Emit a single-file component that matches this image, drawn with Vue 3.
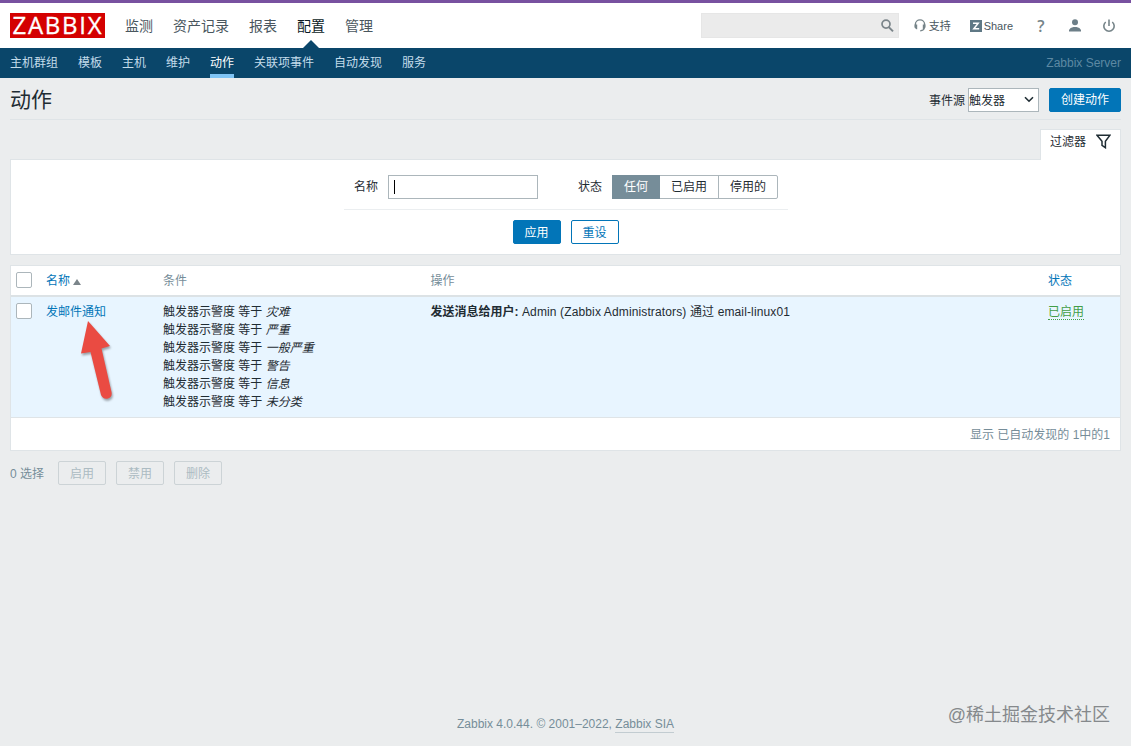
<template>
  <div class="page">
    <!-- 顶部导航 -->
    <header class="top-bar">
      <a class="logo">
        <svg width="95" height="25" viewBox="0 0 95 25">
          <rect width="95" height="25" fill="#d40000" />
          <text x="2.5" y="21.3" textLength="89" lengthAdjust="spacing">ZABBIX</text>
        </svg>
      </a>
      <nav class="top-nav">
        <a
          v-for="item in topMenu"
          :key="item"
          :class="{ selected: item === '配置' }"
        >{{ item }}</a>
      </nav>
      <div class="search">
        <svg width="14" height="14" viewBox="0 0 14 14">
          <circle cx="6" cy="5.1" r="4" fill="none" stroke="#7b858a" stroke-width="1.7" />
          <path d="M8.8 8.1L13 12.4" stroke="#7b858a" stroke-width="2" />
        </svg>
      </div>
      <div class="user-nav">
        <a class="support">
          <svg width="12" height="13" viewBox="0 0 12 13">
            <path d="M1.4 8V5.3a4.5 4.3 0 0 1 9.2 0V8" fill="none" stroke="#768489" stroke-width="1.4" />
            <path d="M.6 5.4h2.6v4.8H2.4L.6 8.8zM8.8 5.4h2.6v3.4L9.6 10.2H8.8z" fill="#768489" />
            <path d="M10.2 8.8q0 2.7-4 3" fill="none" stroke="#768489" stroke-width="1.3" />
          </svg>
          <span>支持</span>
        </a>
        <a class="share">
          <svg width="12" height="12" viewBox="0 0 12 12">
            <rect width="12" height="12" fill="#5f7885" />
            <path d="M3 3.2h5.2L3.8 8.8H9.2" fill="none" stroke="#fff" stroke-width="1.5" />
          </svg>
          <span>Share</span>
        </a>
        <a class="help">?</a>
        <a class="profile">
          <svg width="12" height="13" viewBox="0 0 12 13">
            <circle cx="6" cy="3.3" r="3" fill="#6d7f88" />
            <path d="M0 12.4V11Q1 8.4 4.5 8h3Q11 8.4 12 11v1.4z" fill="#6d7f88" />
          </svg>
        </a>
        <a class="power">
          <svg width="14" height="14" viewBox="0 0 14 14">
            <path d="M3.7 3A5.2 5.2 0 1 0 10.3 3" fill="none" stroke="#768489" stroke-width="1.6" />
            <path d="M7 .6V7" stroke="#768489" stroke-width="1.6" />
          </svg>
        </a>
      </div>
    </header>

    <!-- 二级导航 -->
    <nav class="sub-nav">
      <a
        v-for="item in subMenu"
        :key="item"
        :class="{ selected: item === '动作' }"
      >{{ item }}</a>
      <span class="server-name">Zabbix Server</span>
    </nav>

    <main class="content">
      <div class="title-row">
        <h1>动作</h1>
        <label>事件源</label>
        <div class="select">
          <span>触发器</span>
          <svg width="10" height="7" viewBox="0 0 10 7">
            <path d="M1 1.2L5 5.2L9 1.2" fill="none" stroke="#1f2c33" stroke-width="1.6" />
          </svg>
        </div>
        <button class="btn create-btn">创建动作</button>
      </div>

      <!-- 过滤器 -->
      <div class="filter-tab">
        <span>过滤器</span>
        <svg width="15" height="15" viewBox="0 0 15 15">
          <path d="M1 1.2h13L9.4 7.3v6.4L6 11.4V7.3z" fill="none" stroke="#1f2c33" stroke-width="1.5" />
        </svg>
      </div>
      <section class="filter">
        <div class="filter-fields">
          <label>名称</label>
          <div class="text-input"><i class="caret"></i></div>
          <label class="status-label">状态</label>
          <div class="segments">
            <span
              v-for="item in statusOptions"
              :key="item"
              :class="{ active: item === status }"
              @click="status = item"
            >{{ item }}</span>
          </div>
        </div>
        <div class="filter-buttons">
          <button class="btn">应用</button>
          <button class="btn btn-alt" @click="status = '任何'">重设</button>
        </div>
      </section>

      <!-- 动作列表 -->
      <section class="list">
        <div class="row head">
          <div><i class="checkbox"></i></div>
          <div class="link">名称 <i class="sort-up"></i></div>
          <div>条件</div>
          <div>操作</div>
          <div class="link">状态</div>
        </div>
        <div class="row body">
          <div><i class="checkbox"></i></div>
          <div class="link name-cell">
            发邮件通知
            <svg class="arrow" width="38" height="86" viewBox="0 0 38 86">
              <path d="M10 3L32 28L23.5 30.5L33.5 74Q34.5 79 30 80.5Q25 81.5 23 77L12.5 34L3 35.5Z" fill="#ea4b42" />
            </svg>
          </div>
          <div>
            <p v-for="item in severities" :key="item">触发器示警度 等于 <em>{{ item }}</em></p>
          </div>
          <div><b>发送消息给用户:</b><span class="operation"> Admin (Zabbix Administrators) 通过 email-linux01</span></div>
          <div><span class="enabled">已启用</span></div>
        </div>
        <div class="list-footer">显示 已自动发现的 1中的1</div>
      </section>

      <div class="actions">
        <span>0 选择</span>
        <button v-for="item in bulkActions" :key="item" disabled>{{ item }}</button>
      </div>
    </main>

    <footer>
      <span>Zabbix 4.0.44. © 2001–2022, <a>Zabbix SIA</a></span>
    </footer>
    <div class="watermark">@稀土掘金技术社区</div>
  </div>
</template>

<script setup>
import { ref } from 'vue'

// 菜单
const topMenu = ['监测', '资产记录', '报表', '配置', '管理']
const subMenu = ['主机群组', '模板', '主机', '维护', '动作', '关联项事件', '自动发现', '服务']

// 状态筛选
const statusOptions = ['任何', '已启用', '停用的']
const status = ref('任何')

// 触发条件
const severities = ['灾难', '严重', '一般严重', '警告', '信息', '未分类']

const bulkActions = ['启用', '禁用', '删除']
</script>

<style>
body {
  margin: 0;
  background: #ebedee;
}
</style>

<style scoped>
.page {
  position: relative;
  display: flex;
  flex-direction: column;
  box-sizing: border-box;
  height: 746px;
  border-top: 3px solid #7851a0;
  background: #ebedee;
  color: #1f2c33;
  font: 12px/18px "Liberation Sans", "Noto Sans CJK SC", sans-serif;
  overflow: hidden;
}

.page * {
  box-sizing: border-box;
}

svg {
  display: block;
  flex: none;
}

.top-bar {
  display: flex;
  align-items: center;
  height: 45px;
  flex: none;
  padding: 0 15px 0 10px;
  background: #fff;
}

.logo svg {
  overflow: visible;
}

.logo text {
  fill: #fff;
  stroke: #fff;
  stroke-width: 0.3px;
  font: 24px "Open Sans", sans-serif;
}

.top-nav {
  display: flex;
  gap: 20px;
  margin-left: 20px;
  font-size: 14px;
  line-height: 46px;
  color: #49565e;
}

.top-nav a {
  height: 45px;
}

.top-nav .selected {
  position: relative;
  color: #0a1a24;
}

.top-nav .selected::after {
  content: "";
  position: absolute;
  left: 6px;
  bottom: 0;
  border: 8px solid transparent;
  border-top: 0;
  border-bottom-color: #0a466a;
}

.search {
  display: flex;
  align-items: center;
  justify-content: flex-end;
  width: 198px;
  height: 25px;
  margin-left: auto;
  padding-right: 4px;
  background: #ebebeb;
  border: 1px solid #e6e6e6;
}

.user-nav {
  display: flex;
  align-items: center;
  margin-left: 15px;
  font-size: 11px;
  color: #49565e;
}

.user-nav a {
  display: flex;
  align-items: center;
}

.support {
  gap: 3px;
}

.share {
  gap: 2px;
  margin-left: 19px;
}

.user-nav .help {
  width: 10px;
  margin-left: 23px;
  justify-content: center;
  font: 600 16px "Open Sans", sans-serif;
  color: #768489;
}

.profile {
  margin-left: 23px;
}

.power {
  margin-left: 21px;
}

.sub-nav {
  display: flex;
  gap: 20px;
  height: 30px;
  flex: none;
  padding: 0 10px;
  background: #0a466a;
  color: #c3dcea;
  line-height: 31px;
}

.sub-nav .selected {
  color: #fff;
  border-bottom: 4px solid #7fc4f5;
}

.server-name {
  margin-left: auto;
  color: #5d89a3;
  line-height: 30px;
}

.content {
  padding: 0 10px;
}

.title-row {
  display: flex;
  align-items: center;
  height: 42px;
  padding-top: 2px;
  border-bottom: 1px solid #dfe4e7;
}

h1 {
  margin: 0 auto 0 0;
  font-size: 21px;
  font-weight: normal;
}

.title-row label {
  padding-top: 2px;
}

.select {
  display: flex;
  align-items: center;
  justify-content: space-between;
  width: 71px;
  height: 24px;
  margin: 0 10px 0 3px;
  padding-right: 4px;
  border: 1px solid #acb6bb;
  background: #fff;
}

.select span {
  padding-top: 2px;
}

.btn {
  height: 24px;
  width: 48px;
  padding: 2px 0 0;
  border: 1px solid #0275b8;
  border-radius: 2px;
  background: #0275b8;
  color: #fff;
  font: inherit;
  line-height: 20px;
}

.create-btn {
  width: 72px;
  padding-top: 0;
}

.btn-alt {
  background: #fff;
  color: #0275b8;
}

.filter-tab {
  position: relative;
  display: flex;
  justify-content: space-between;
  align-items: center;
  width: 81px;
  height: 31px;
  margin: 9px 0 -1px auto;
  padding: 0 9px 6px 9px;
  border: 1px solid #dfe4e7;
  border-bottom: 0;
  background: #fff;
}

.filter-tab svg {
  margin-top: -2px;
}

.filter {
  height: 96px;
  border: 1px solid #dfe4e7;
  background: #fff;
}

.filter-fields {
  display: flex;
  align-items: center;
  width: 444px;
  height: 50px;
  margin-left: 333px;
  padding: 5px 10px 0;
  border-bottom: 1px solid #ebeef0;
}

.text-input {
  width: 150px;
  height: 24px;
  margin-left: 10px;
  padding: 4px 5px;
  border: 1px solid #acb6bb;
}

.caret {
  display: block;
  width: 1px;
  height: 14px;
  background: #000;
}

.status-label {
  margin-left: 40px;
}

.segments {
  display: flex;
  height: 24px;
  margin-left: 10px;
  border: 1px solid #acb6bb;
  border-radius: 2px;
  line-height: 23px;
}

.segments span {
  height: 22px;
  padding: 0 11px;
}

.segments span + span {
  border-left: 1px solid #acb6bb;
}

.segments .active {
  height: 24px;
  margin: -1px 0 -1px -1px;
  padding: 1px 12px;
  background: #768d99;
  color: #fff;
}

.segments .active + span {
  border-left: 0;
}

.filter-buttons {
  display: flex;
  justify-content: center;
  gap: 10px;
  padding-top: 10px;
}

.list {
  height: 186px;
  margin-top: 10px;
  border: 1px solid #dfe4e7;
  background: #fff;
}

.row {
  display: grid;
  grid-template-columns: 35px 117px 267.5px 617.5px 1fr;
}

.head {
  height: 31px;
  padding-top: 6px;
  border-bottom: 2px solid #dce2e5;
  color: #768d99;
}

.body {
  height: 121px;
  padding-top: 6px;
  border-bottom: 1px solid #dfe4e7;
  background: #e8f5ff;
}

.row p {
  margin: 0;
}

.link {
  color: #0275b8;
}

.checkbox {
  display: block;
  width: 16px;
  height: 16px;
  margin-left: 5px;
  border: 1px solid #acb6bb;
  border-radius: 2px;
  background: #fff;
}

.sort-up {
  display: inline-block;
  border: 4px solid transparent;
  border-top: 0;
  border-bottom: 6px solid #7b858a;
}

.name-cell {
  position: relative;
}

.arrow {
  position: absolute;
  left: 32px;
  top: 15px;
  filter: drop-shadow(1px 2px 1px rgba(0, 0, 0, 0.35));
}

.operation {
  letter-spacing: 0.13px;
}

.enabled {
  display: inline-block;
  height: 17px;
  border-bottom: 1px dotted #429e47;
  color: #429e47;
}

.list-footer {
  padding: 8px 10px;
  text-align: right;
  color: #768d99;
}

.actions {
  display: flex;
  align-items: center;
  gap: 10px;
  margin-top: 10px;
  color: #768d99;
}

.actions span {
  width: 38px;
  padding-top: 1px;
}

.actions button {
  width: 48px;
  height: 24px;
  padding: 2px 0 0;
  border: 1px solid #ccd3d6;
  border-radius: 2px;
  background: transparent;
  color: #acbbc2;
  font: inherit;
  line-height: 20px;
}

footer {
  margin-top: auto;
  padding-bottom: 13px;
  text-align: center;
  color: #768d99;
}

footer a {
  display: inline-block;
  line-height: 15px;
  border-bottom: 1px solid #c2ccd1;
}

.watermark {
  position: absolute;
  right: 21px;
  bottom: 18px;
  font-size: 18px;
  line-height: 26px;
  color: #85898c;
}
</style>
